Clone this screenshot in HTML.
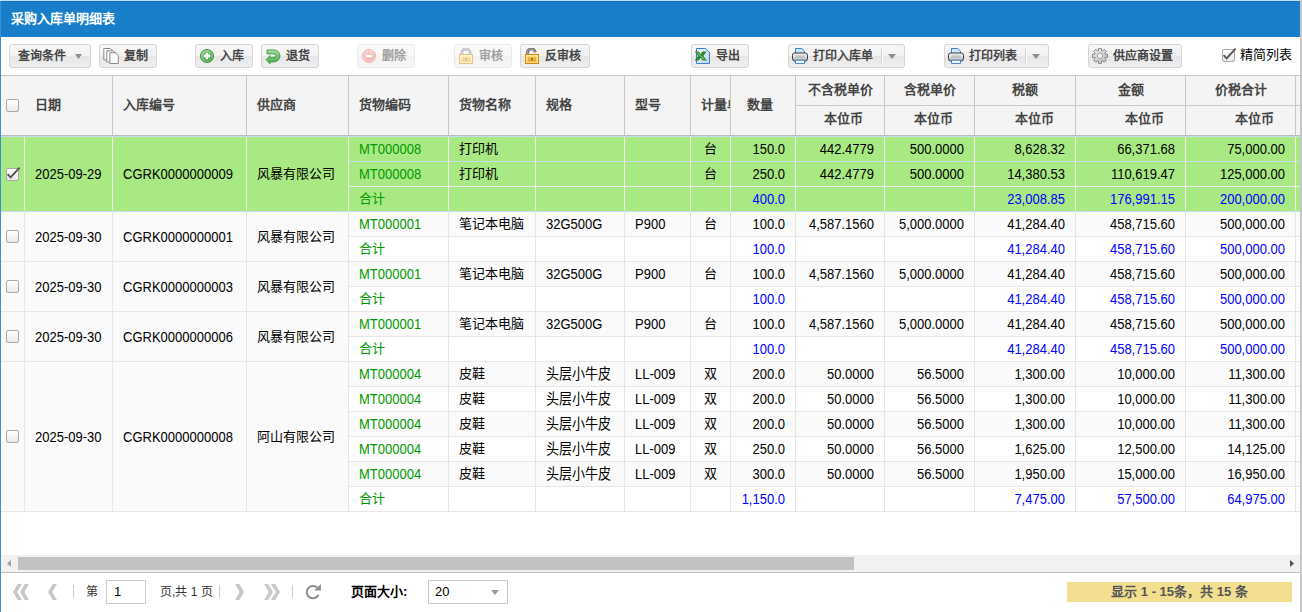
<!DOCTYPE html><html lang="zh-CN"><head><meta charset="utf-8"><style>
*{margin:0;padding:0;box-sizing:border-box}
html,body{width:1302px;height:612px;overflow:hidden;background:#fff}
body{position:relative;font-family:"Liberation Sans",sans-serif;color:#000}
.a{position:absolute}
.t{position:absolute;white-space:nowrap;font-size:13px;line-height:25px;height:25px}
.r{text-align:right}
.sy{transform:scaleY(1.1);transform-origin:0 8px}
.c{text-align:center}
.btn{position:absolute;top:44px;height:24px;border:1px solid #d6d6d6;border-radius:3px;
 background:linear-gradient(#f7f7f7 0,#f2f2f2 11px,#e6e6e6 11px,#efefef 22px)}
.bt{position:absolute;top:0;height:22px;line-height:22px;font-size:12px;font-weight:bold;color:#444;white-space:nowrap}
.ic{position:absolute;top:3px;width:16px;height:16px}
.hd{position:absolute;font-size:13px;font-weight:bold;color:#444;white-space:nowrap;height:20px;line-height:20px}
.cb{position:absolute;width:13px;height:13px;border:1px solid #a9a9a9;border-radius:2px;background:linear-gradient(#fff,#e9e9e9)}
</style></head><body>
<div class="a" style="left:0;top:0;width:1300px;height:1px;background:#c5dff2"></div>
<div class="a" style="left:0;top:1px;width:1300px;height:36px;background:#187eca"></div>
<div class="a" style="left:0;top:1px;width:1300px;height:1px;background:#0f74c6"></div>
<div class="a" style="left:11px;top:9px;height:20px;line-height:20px;font-size:13px;font-weight:bold;color:#fff;white-space:nowrap">采购入库单明细表</div>
<div class="btn" style="left:9px;width:82px"><div class="bt" style="left:8px;color:#444">查询条件</div></div>
<svg class="a" style="left:75px;top:54px" width="7" height="5" viewBox="0 0 7 5"><path d="M0 0h7L3.5 5z" fill="#8e8e8e"/></svg>
<div class="btn" style="left:99px;width:58px"><svg class="ic" style="left:3px" viewBox="0 0 16 16"><g stroke="#8a8a8a" stroke-width="1" stroke-linejoin="round">
<path d="M0.8 0.5h6.5l2 2v9.3h-8.5z" fill="#fff"/>
<path d="M3.8 2.8h6.5l2 2v9.2h-8.5z" fill="#fff"/>
<path d="M6.8 4.7h5.7l2.8 2.9v7.9h-8.5z" fill="#fbfbfb"/></g></svg><div class="bt" style="left:24px;color:#444">复制</div></div>
<div class="btn" style="left:195px;width:58px"><svg class="ic" style="left:3px" viewBox="0 0 16 16"><defs><linearGradient id="ga" x1="0" y1="0" x2="0.6" y2="1"><stop offset="0" stop-color="#9ad69a"/><stop offset="1" stop-color="#3f9f3f"/></linearGradient></defs>
<circle cx="8" cy="8" r="6.6" fill="url(#ga)" stroke="#3b8f3b" stroke-width="0.9"/><circle cx="8" cy="8" r="5.4" fill="none" stroke="#c4ebc4" stroke-width="0.6" opacity="0.8"/>
<path d="M6.8 4.8h2.4v2h2v2.4h-2v2H6.8v-2h-2V6.8h2z" fill="#fff"/></svg><div class="bt" style="left:24px;color:#444">入库</div></div>
<div class="btn" style="left:261px;width:58px"><svg class="ic" style="left:3px" viewBox="0 0 16 16"><defs><linearGradient id="gu" x1="0" y1="0" x2="0" y2="1"><stop offset="0" stop-color="#9fdc9f"/><stop offset="1" stop-color="#4aab4a"/></linearGradient></defs>
<path d="M2 1.9H9A6 6 0 0 1 9 13.9H5V15.8L1.1 11.7L5 7.6V9.3H9A1.7 1.7 0 0 0 9 5.9H2z" fill="url(#gu)" stroke="#3a8d3a" stroke-width="0.8" stroke-linejoin="round"/></svg><div class="bt" style="left:24px;color:#444">退货</div></div>
<div class="btn" style="left:357px;width:58px;opacity:0.5"><svg class="ic" style="left:3px" viewBox="0 0 16 16"><defs><linearGradient id="gd" x1="0" y1="0" x2="0" y2="1"><stop offset="0" stop-color="#f3a79d"/><stop offset="1" stop-color="#e0685c"/></linearGradient></defs>
<circle cx="8" cy="8" r="6.5" fill="url(#gd)" stroke="#d65a4e" stroke-width="0.9"/><circle cx="8" cy="8" r="5.4" fill="none" stroke="#fbd0cb" stroke-width="0.6"/>
<rect x="5" y="7" width="6" height="2.1" fill="#fff"/></svg><div class="bt" style="left:24px;color:#444">删除</div></div>
<div class="btn" style="left:454px;width:58px;opacity:0.5"><svg class="ic" style="left:3px" viewBox="0 0 16 16"><defs><linearGradient id="gl" x1="0" y1="0" x2="0" y2="1"><stop offset="0" stop-color="#ffe680"/><stop offset="1" stop-color="#f2b020"/></linearGradient></defs>
<path d="M3.8 7V5.2A4.2 4.2 0 0 1 12.2 5.2V7" fill="none" stroke="#7a7a7a" stroke-width="2.8"/><path d="M3.8 7V5.2A4.2 4.2 0 0 1 12.2 5.2V7" fill="none" stroke="#c4c4c4" stroke-width="0.9"/><rect x="1.5" y="6.5" width="13" height="9" fill="url(#gl)" stroke="#d8850f" stroke-width="1"/>
<rect x="2.7" y="7.7" width="10.6" height="6.6" fill="none" stroke="#fff3b8" stroke-width="0.8"/>
<path d="M4 10h2.2M4 12.2h2.2M9.8 10H12M9.8 12.2H12" stroke="#d98f20" stroke-width="0.9"/>
<rect x="7.2" y="9.4" width="1.6" height="3.4" rx="0.6" fill="#9a5c10"/></svg><div class="bt" style="left:24px;color:#444">审核</div></div>
<div class="btn" style="left:520px;width:70px"><svg class="ic" style="left:3px" viewBox="0 0 16 16"><defs><linearGradient id="gl2" x1="0" y1="0" x2="0" y2="1"><stop offset="0" stop-color="#ffe680"/><stop offset="1" stop-color="#f2b020"/></linearGradient></defs>
<path d="M3.4 6.6V4.8A3.9 3.6 0 0 1 11.2 4.3" fill="none" stroke="#6a6a6a" stroke-width="2.8"/><path d="M3.4 6.6V4.8A3.9 3.6 0 0 1 11.2 4.3" fill="none" stroke="#b8b8b8" stroke-width="0.9"/><rect x="1.5" y="6.5" width="13" height="9" fill="url(#gl2)" stroke="#d8850f" stroke-width="1"/>
<rect x="2.7" y="7.7" width="10.6" height="6.6" fill="none" stroke="#fff3b8" stroke-width="0.8"/>
<path d="M4 10h2.2M4 12.2h2.2M9.8 10H12M9.8 12.2H12" stroke="#d98f20" stroke-width="0.9"/>
<rect x="7.2" y="9.4" width="1.6" height="3.4" rx="0.6" fill="#9a5c10"/></svg><div class="bt" style="left:24px;color:#444">反审核</div></div>
<div class="btn" style="left:691px;width:58px"><svg class="ic" style="left:3px" viewBox="0 0 16 16"><defs><linearGradient id="gx" x1="0" y1="0" x2="1" y2="1"><stop offset="0" stop-color="#f2f7fe"/><stop offset="1" stop-color="#b9d3f3"/></linearGradient></defs>
<path d="M1.5 0.5h9.2l3.8 3.8v11.2h-13z" fill="url(#gx)" stroke="#3a7fd5" stroke-width="1" stroke-linejoin="round"/>
<path d="M0 3.8h3.8l1.9 2.6 1.9-2.6h3.6L8.1 8l3.3 4.2H7.7L5.7 9.5 3.6 12.2H0L3.4 8z" fill="#2c8a2c" stroke="#1f6f1f" stroke-width="0.4"/>
<path d="M2 4.4l7.4 7.2" stroke="#b5e3b5" stroke-width="0.8"/></svg><div class="bt" style="left:24px;color:#444">导出</div></div>
<div class="btn" style="left:788px;width:117px"><svg class="ic" style="left:3px" viewBox="0 0 16 16"><defs><linearGradient id="gp" x1="0" y1="0" x2="0" y2="1"><stop offset="0" stop-color="#f4f4f4"/><stop offset="0.5" stop-color="#dcdcdc"/><stop offset="1" stop-color="#a8a8a8"/></linearGradient></defs>
<path d="M3.5 0.5h6.3l2.7 2.7v4.5h-9z" fill="#cfe2fa" stroke="#3a7fd5" stroke-width="1"/>
<rect x="0.5" y="5" width="15" height="8" rx="2.2" fill="url(#gp)" stroke="#3a3a3a" stroke-width="1"/>
<rect x="3.5" y="7.4" width="9" height="3" fill="#c4c4c4"/>
<path d="M3.5 12.2h9v3.2h-9z" fill="#fff" stroke="#3a7fd5" stroke-width="1"/></svg><div class="bt" style="left:24px;color:#444">打印入库单</div><div class="a" style="left:92px;top:3px;width:1px;height:16px;background:#d2d2d2"></div><div class="a" style="left:93px;top:3px;width:1px;height:16px;background:#fff"></div></div>
<svg class="a" style="left:888px;top:54px" width="8" height="5" viewBox="0 0 8 5"><path d="M0 0h8L4.0 5z" fill="#8e8e8e"/></svg>
<div class="btn" style="left:944px;width:105px"><svg class="ic" style="left:3px" viewBox="0 0 16 16"><defs><linearGradient id="gp" x1="0" y1="0" x2="0" y2="1"><stop offset="0" stop-color="#f4f4f4"/><stop offset="0.5" stop-color="#dcdcdc"/><stop offset="1" stop-color="#a8a8a8"/></linearGradient></defs>
<path d="M3.5 0.5h6.3l2.7 2.7v4.5h-9z" fill="#cfe2fa" stroke="#3a7fd5" stroke-width="1"/>
<rect x="0.5" y="5" width="15" height="8" rx="2.2" fill="url(#gp)" stroke="#3a3a3a" stroke-width="1"/>
<rect x="3.5" y="7.4" width="9" height="3" fill="#c4c4c4"/>
<path d="M3.5 12.2h9v3.2h-9z" fill="#fff" stroke="#3a7fd5" stroke-width="1"/></svg><div class="bt" style="left:24px;color:#444">打印列表</div><div class="a" style="left:80px;top:3px;width:1px;height:16px;background:#d2d2d2"></div><div class="a" style="left:81px;top:3px;width:1px;height:16px;background:#fff"></div></div>
<svg class="a" style="left:1032px;top:54px" width="8" height="5" viewBox="0 0 8 5"><path d="M0 0h8L4.0 5z" fill="#8e8e8e"/></svg>
<div class="btn" style="left:1088px;width:94px"><svg class="ic" style="left:3px" viewBox="0 0 16 16"><defs><linearGradient id="gg" x1="0" y1="0" x2="1" y2="1"><stop offset="0" stop-color="#ececec"/><stop offset="1" stop-color="#bdbdbd"/></linearGradient></defs>
<path d="M6.40 2.64 L6.40 0.27 L9.60 0.27 L9.60 2.64 L10.52 3.02 L12.19 1.34 L14.46 3.61 L12.78 5.28 L13.16 6.20 L15.53 6.20 L15.53 9.40 L13.16 9.40 L12.78 10.32 L14.46 11.99 L12.19 14.26 L10.52 12.58 L9.60 12.96 L9.60 15.33 L6.40 15.33 L6.40 12.96 L5.48 12.58 L3.81 14.26 L1.54 11.99 L3.22 10.32 L2.84 9.40 L0.47 9.40 L0.47 6.20 L2.84 6.20 L3.22 5.28 L1.54 3.61 L3.81 1.34 L5.48 3.02Z" fill="url(#gg)" stroke="#7a7a7a" stroke-width="0.9" stroke-linejoin="round"/>
<circle cx="8" cy="7.8" r="2.7" fill="#f2f2f2" stroke="#9a9a9a" stroke-width="0.9"/></svg><div class="bt" style="left:24px;color:#444">供应商设置</div></div>
<div class="cb" style="left:1222px;top:49px"></div>
<svg class="a" style="left:1222px;top:45px" width="16" height="17" viewBox="0 0 16 17"><path d="M1.6 10.2L4.6 13.3L13.6 3.6" fill="none" stroke="#555" stroke-width="1.9"/></svg>
<div class="a" style="left:1240px;top:45px;height:20px;line-height:20px;font-size:13px;color:#000;white-space:nowrap">精简列表</div>
<div class="a" style="left:1px;top:75px;width:1299px;height:1px;background:#c6c6c6"></div>
<div class="a" style="left:1px;top:76px;width:1299px;height:59px;background:#f4f4f4"></div>
<div class="a" style="left:1px;top:135px;width:1299px;height:1px;background:#bcbcbc"></div>
<div class="a" style="left:112px;top:76px;width:1px;height:59px;background:#c8c8c8"></div>
<div class="a" style="left:246px;top:76px;width:1px;height:59px;background:#c8c8c8"></div>
<div class="a" style="left:348px;top:76px;width:1px;height:59px;background:#c8c8c8"></div>
<div class="a" style="left:448px;top:76px;width:1px;height:59px;background:#c8c8c8"></div>
<div class="a" style="left:535px;top:76px;width:1px;height:59px;background:#c8c8c8"></div>
<div class="a" style="left:624px;top:76px;width:1px;height:59px;background:#c8c8c8"></div>
<div class="a" style="left:690px;top:76px;width:1px;height:59px;background:#c8c8c8"></div>
<div class="a" style="left:730px;top:76px;width:1px;height:59px;background:#c8c8c8"></div>
<div class="a" style="left:795px;top:76px;width:1px;height:59px;background:#c8c8c8"></div>
<div class="a" style="left:884px;top:76px;width:1px;height:59px;background:#c8c8c8"></div>
<div class="a" style="left:974px;top:76px;width:1px;height:59px;background:#c8c8c8"></div>
<div class="a" style="left:1075px;top:76px;width:1px;height:59px;background:#c8c8c8"></div>
<div class="a" style="left:1185px;top:76px;width:1px;height:59px;background:#c8c8c8"></div>
<div class="a" style="left:1295px;top:76px;width:1px;height:59px;background:#c8c8c8"></div>
<div class="a" style="left:795px;top:105px;width:505px;height:1px;background:#c8c8c8"></div>
<div class="cb" style="left:6px;top:99px"></div>
<div class="hd" style="left:35px;top:95px">日期</div>
<div class="hd" style="left:123px;top:95px">入库编号</div>
<div class="hd" style="left:257px;top:95px">供应商</div>
<div class="hd" style="left:359px;top:95px">货物编码</div>
<div class="hd" style="left:459px;top:95px">货物名称</div>
<div class="hd" style="left:546px;top:95px">规格</div>
<div class="hd" style="left:635px;top:95px">型号</div>
<div class="hd" style="left:701px;top:95px;width:29px;text-align:left;overflow:hidden">计量单位</div>
<div class="hd" style="left:747px;top:95px">数量</div>
<div class="hd" style="left:796px;top:80px;width:88px;text-align:center;overflow:hidden">不含税单价</div>
<div class="hd" style="left:796px;top:109px;width:67px;text-align:right;overflow:hidden">本位币</div>
<div class="hd" style="left:885px;top:80px;width:89px;text-align:center;overflow:hidden">含税单价</div>
<div class="hd" style="left:885px;top:109px;width:68px;text-align:right;overflow:hidden">本位币</div>
<div class="hd" style="left:975px;top:80px;width:100px;text-align:center;overflow:hidden">税额</div>
<div class="hd" style="left:975px;top:109px;width:79px;text-align:right;overflow:hidden">本位币</div>
<div class="hd" style="left:1076px;top:80px;width:109px;text-align:center;overflow:hidden">金额</div>
<div class="hd" style="left:1076px;top:109px;width:88px;text-align:right;overflow:hidden">本位币</div>
<div class="hd" style="left:1186px;top:80px;width:109px;text-align:center;overflow:hidden">价税合计</div>
<div class="hd" style="left:1186px;top:109px;width:88px;text-align:right;overflow:hidden">本位币</div>
<div class="a" style="left:1px;top:137px;width:1299px;height:75px;background:#a8e984"></div>
<div class="a" style="left:1px;top:136px;width:1299px;height:1px;background:#c4dcf0"></div>
<div class="a" style="left:348px;top:161px;width:952px;height:1px;background:#c6def0"></div>
<div class="a" style="left:348px;top:186px;width:952px;height:1px;background:#e4ecf0"></div>
<div class="a" style="left:1px;top:211px;width:1299px;height:1px;background:#c4dcf5"></div>
<div class="a" style="left:24px;top:137px;width:1px;height:74px;background:#ececec"></div>
<div class="a" style="left:112px;top:137px;width:1px;height:74px;background:#ececec"></div>
<div class="a" style="left:246px;top:137px;width:1px;height:74px;background:#ececec"></div>
<div class="a" style="left:348px;top:137px;width:1px;height:74px;background:#ececec"></div>
<div class="a" style="left:448px;top:137px;width:1px;height:74px;background:#ececec"></div>
<div class="a" style="left:535px;top:137px;width:1px;height:74px;background:#ececec"></div>
<div class="a" style="left:624px;top:137px;width:1px;height:74px;background:#ececec"></div>
<div class="a" style="left:690px;top:137px;width:1px;height:74px;background:#ececec"></div>
<div class="a" style="left:730px;top:137px;width:1px;height:74px;background:#ececec"></div>
<div class="a" style="left:795px;top:137px;width:1px;height:74px;background:#ececec"></div>
<div class="a" style="left:884px;top:137px;width:1px;height:74px;background:#ececec"></div>
<div class="a" style="left:974px;top:137px;width:1px;height:74px;background:#ececec"></div>
<div class="a" style="left:1075px;top:137px;width:1px;height:74px;background:#ececec"></div>
<div class="a" style="left:1185px;top:137px;width:1px;height:74px;background:#ececec"></div>
<div class="a" style="left:1295px;top:137px;width:1px;height:74px;background:#ececec"></div>
<div class="cb" style="left:6px;top:168px"></div>
<svg class="a" style="left:6px;top:164px" width="16" height="17" viewBox="0 0 16 17"><path d="M1.6 10.2L4.6 13.3L13.6 3.6" fill="none" stroke="#555" stroke-width="1.9"/></svg>
<div class="t sy" style="left:35px;top:161px">2025-09-29</div>
<div class="t sy" style="left:123px;top:161px">CGRK0000000009</div>
<div class="t" style="left:257px;top:161px">风暴有限公司</div>
<div class="t sy" style="left:359px;top:136px;color:#009900">MT000008</div>
<div class="t" style="left:459px;top:136px">打印机</div>
<div class="t c" style="left:691px;top:136px;width:39px">台</div>
<div class="t r sy" style="left:730px;top:136px;width:55px;color:#000">150.0</div>
<div class="t r sy" style="left:795px;top:136px;width:79px;color:#000">442.4779</div>
<div class="t r sy" style="left:884px;top:136px;width:80px;color:#000">500.0000</div>
<div class="t r sy" style="left:974px;top:136px;width:91px;color:#000">8,628.32</div>
<div class="t r sy" style="left:1075px;top:136px;width:100px;color:#000">66,371.68</div>
<div class="t r sy" style="left:1185px;top:136px;width:100px;color:#000">75,000.00</div>
<div class="t sy" style="left:359px;top:161px;color:#009900">MT000008</div>
<div class="t" style="left:459px;top:161px">打印机</div>
<div class="t c" style="left:691px;top:161px;width:39px">台</div>
<div class="t r sy" style="left:730px;top:161px;width:55px;color:#000">250.0</div>
<div class="t r sy" style="left:795px;top:161px;width:79px;color:#000">442.4779</div>
<div class="t r sy" style="left:884px;top:161px;width:80px;color:#000">500.0000</div>
<div class="t r sy" style="left:974px;top:161px;width:91px;color:#000">14,380.53</div>
<div class="t r sy" style="left:1075px;top:161px;width:100px;color:#000">110,619.47</div>
<div class="t r sy" style="left:1185px;top:161px;width:100px;color:#000">125,000.00</div>
<div class="t" style="left:359px;top:186px;color:#009900">合计</div>
<div class="t r sy" style="left:730px;top:186px;width:55px;color:#0000ff">400.0</div>
<div class="t r sy" style="left:974px;top:186px;width:91px;color:#0000ff">23,008.85</div>
<div class="t r sy" style="left:1075px;top:186px;width:100px;color:#0000ff">176,991.15</div>
<div class="t r sy" style="left:1185px;top:186px;width:100px;color:#0000ff">200,000.00</div>
<div class="a" style="left:1px;top:212px;width:347px;height:49px;background:#fafafa"></div>
<div class="a" style="left:349px;top:212px;width:951px;height:24px;background:#fafafa"></div>
<div class="a" style="left:349px;top:237px;width:951px;height:24px;background:#ffffff"></div>
<div class="a" style="left:348px;top:236px;width:952px;height:1px;background:#e6e6e6"></div>
<div class="a" style="left:1px;top:261px;width:1299px;height:1px;background:#e6e6e6"></div>
<div class="a" style="left:24px;top:212px;width:1px;height:49px;background:#e6e6e6"></div>
<div class="a" style="left:112px;top:212px;width:1px;height:49px;background:#e6e6e6"></div>
<div class="a" style="left:246px;top:212px;width:1px;height:49px;background:#e6e6e6"></div>
<div class="a" style="left:348px;top:212px;width:1px;height:49px;background:#e6e6e6"></div>
<div class="a" style="left:448px;top:212px;width:1px;height:49px;background:#e6e6e6"></div>
<div class="a" style="left:535px;top:212px;width:1px;height:49px;background:#e6e6e6"></div>
<div class="a" style="left:624px;top:212px;width:1px;height:49px;background:#e6e6e6"></div>
<div class="a" style="left:690px;top:212px;width:1px;height:49px;background:#e6e6e6"></div>
<div class="a" style="left:730px;top:212px;width:1px;height:49px;background:#e6e6e6"></div>
<div class="a" style="left:795px;top:212px;width:1px;height:49px;background:#e6e6e6"></div>
<div class="a" style="left:884px;top:212px;width:1px;height:49px;background:#e6e6e6"></div>
<div class="a" style="left:974px;top:212px;width:1px;height:49px;background:#e6e6e6"></div>
<div class="a" style="left:1075px;top:212px;width:1px;height:49px;background:#e6e6e6"></div>
<div class="a" style="left:1185px;top:212px;width:1px;height:49px;background:#e6e6e6"></div>
<div class="a" style="left:1295px;top:212px;width:1px;height:49px;background:#e6e6e6"></div>
<div class="cb" style="left:6px;top:230px"></div>
<div class="t sy" style="left:35px;top:224px">2025-09-30</div>
<div class="t sy" style="left:123px;top:224px">CGRK0000000001</div>
<div class="t" style="left:257px;top:224px">风暴有限公司</div>
<div class="t sy" style="left:359px;top:211px;color:#009900">MT000001</div>
<div class="t" style="left:459px;top:211px">笔记本电脑</div>
<div class="t sy" style="left:546px;top:211px">32G500G</div>
<div class="t sy" style="left:635px;top:211px">P900</div>
<div class="t c" style="left:691px;top:211px;width:39px">台</div>
<div class="t r sy" style="left:730px;top:211px;width:55px;color:#000">100.0</div>
<div class="t r sy" style="left:795px;top:211px;width:79px;color:#000">4,587.1560</div>
<div class="t r sy" style="left:884px;top:211px;width:80px;color:#000">5,000.0000</div>
<div class="t r sy" style="left:974px;top:211px;width:91px;color:#000">41,284.40</div>
<div class="t r sy" style="left:1075px;top:211px;width:100px;color:#000">458,715.60</div>
<div class="t r sy" style="left:1185px;top:211px;width:100px;color:#000">500,000.00</div>
<div class="t" style="left:359px;top:236px;color:#009900">合计</div>
<div class="t r sy" style="left:730px;top:236px;width:55px;color:#0000ff">100.0</div>
<div class="t r sy" style="left:974px;top:236px;width:91px;color:#0000ff">41,284.40</div>
<div class="t r sy" style="left:1075px;top:236px;width:100px;color:#0000ff">458,715.60</div>
<div class="t r sy" style="left:1185px;top:236px;width:100px;color:#0000ff">500,000.00</div>
<div class="a" style="left:1px;top:262px;width:347px;height:49px;background:#fafafa"></div>
<div class="a" style="left:349px;top:262px;width:951px;height:24px;background:#fafafa"></div>
<div class="a" style="left:349px;top:287px;width:951px;height:24px;background:#ffffff"></div>
<div class="a" style="left:348px;top:286px;width:952px;height:1px;background:#e6e6e6"></div>
<div class="a" style="left:1px;top:311px;width:1299px;height:1px;background:#e6e6e6"></div>
<div class="a" style="left:24px;top:262px;width:1px;height:49px;background:#e6e6e6"></div>
<div class="a" style="left:112px;top:262px;width:1px;height:49px;background:#e6e6e6"></div>
<div class="a" style="left:246px;top:262px;width:1px;height:49px;background:#e6e6e6"></div>
<div class="a" style="left:348px;top:262px;width:1px;height:49px;background:#e6e6e6"></div>
<div class="a" style="left:448px;top:262px;width:1px;height:49px;background:#e6e6e6"></div>
<div class="a" style="left:535px;top:262px;width:1px;height:49px;background:#e6e6e6"></div>
<div class="a" style="left:624px;top:262px;width:1px;height:49px;background:#e6e6e6"></div>
<div class="a" style="left:690px;top:262px;width:1px;height:49px;background:#e6e6e6"></div>
<div class="a" style="left:730px;top:262px;width:1px;height:49px;background:#e6e6e6"></div>
<div class="a" style="left:795px;top:262px;width:1px;height:49px;background:#e6e6e6"></div>
<div class="a" style="left:884px;top:262px;width:1px;height:49px;background:#e6e6e6"></div>
<div class="a" style="left:974px;top:262px;width:1px;height:49px;background:#e6e6e6"></div>
<div class="a" style="left:1075px;top:262px;width:1px;height:49px;background:#e6e6e6"></div>
<div class="a" style="left:1185px;top:262px;width:1px;height:49px;background:#e6e6e6"></div>
<div class="a" style="left:1295px;top:262px;width:1px;height:49px;background:#e6e6e6"></div>
<div class="cb" style="left:6px;top:280px"></div>
<div class="t sy" style="left:35px;top:274px">2025-09-30</div>
<div class="t sy" style="left:123px;top:274px">CGRK0000000003</div>
<div class="t" style="left:257px;top:274px">风暴有限公司</div>
<div class="t sy" style="left:359px;top:261px;color:#009900">MT000001</div>
<div class="t" style="left:459px;top:261px">笔记本电脑</div>
<div class="t sy" style="left:546px;top:261px">32G500G</div>
<div class="t sy" style="left:635px;top:261px">P900</div>
<div class="t c" style="left:691px;top:261px;width:39px">台</div>
<div class="t r sy" style="left:730px;top:261px;width:55px;color:#000">100.0</div>
<div class="t r sy" style="left:795px;top:261px;width:79px;color:#000">4,587.1560</div>
<div class="t r sy" style="left:884px;top:261px;width:80px;color:#000">5,000.0000</div>
<div class="t r sy" style="left:974px;top:261px;width:91px;color:#000">41,284.40</div>
<div class="t r sy" style="left:1075px;top:261px;width:100px;color:#000">458,715.60</div>
<div class="t r sy" style="left:1185px;top:261px;width:100px;color:#000">500,000.00</div>
<div class="t" style="left:359px;top:286px;color:#009900">合计</div>
<div class="t r sy" style="left:730px;top:286px;width:55px;color:#0000ff">100.0</div>
<div class="t r sy" style="left:974px;top:286px;width:91px;color:#0000ff">41,284.40</div>
<div class="t r sy" style="left:1075px;top:286px;width:100px;color:#0000ff">458,715.60</div>
<div class="t r sy" style="left:1185px;top:286px;width:100px;color:#0000ff">500,000.00</div>
<div class="a" style="left:1px;top:312px;width:347px;height:49px;background:#fafafa"></div>
<div class="a" style="left:349px;top:312px;width:951px;height:24px;background:#fafafa"></div>
<div class="a" style="left:349px;top:337px;width:951px;height:24px;background:#ffffff"></div>
<div class="a" style="left:348px;top:336px;width:952px;height:1px;background:#e6e6e6"></div>
<div class="a" style="left:1px;top:361px;width:1299px;height:1px;background:#e6e6e6"></div>
<div class="a" style="left:24px;top:312px;width:1px;height:49px;background:#e6e6e6"></div>
<div class="a" style="left:112px;top:312px;width:1px;height:49px;background:#e6e6e6"></div>
<div class="a" style="left:246px;top:312px;width:1px;height:49px;background:#e6e6e6"></div>
<div class="a" style="left:348px;top:312px;width:1px;height:49px;background:#e6e6e6"></div>
<div class="a" style="left:448px;top:312px;width:1px;height:49px;background:#e6e6e6"></div>
<div class="a" style="left:535px;top:312px;width:1px;height:49px;background:#e6e6e6"></div>
<div class="a" style="left:624px;top:312px;width:1px;height:49px;background:#e6e6e6"></div>
<div class="a" style="left:690px;top:312px;width:1px;height:49px;background:#e6e6e6"></div>
<div class="a" style="left:730px;top:312px;width:1px;height:49px;background:#e6e6e6"></div>
<div class="a" style="left:795px;top:312px;width:1px;height:49px;background:#e6e6e6"></div>
<div class="a" style="left:884px;top:312px;width:1px;height:49px;background:#e6e6e6"></div>
<div class="a" style="left:974px;top:312px;width:1px;height:49px;background:#e6e6e6"></div>
<div class="a" style="left:1075px;top:312px;width:1px;height:49px;background:#e6e6e6"></div>
<div class="a" style="left:1185px;top:312px;width:1px;height:49px;background:#e6e6e6"></div>
<div class="a" style="left:1295px;top:312px;width:1px;height:49px;background:#e6e6e6"></div>
<div class="cb" style="left:6px;top:330px"></div>
<div class="t sy" style="left:35px;top:324px">2025-09-30</div>
<div class="t sy" style="left:123px;top:324px">CGRK0000000006</div>
<div class="t" style="left:257px;top:324px">风暴有限公司</div>
<div class="t sy" style="left:359px;top:311px;color:#009900">MT000001</div>
<div class="t" style="left:459px;top:311px">笔记本电脑</div>
<div class="t sy" style="left:546px;top:311px">32G500G</div>
<div class="t sy" style="left:635px;top:311px">P900</div>
<div class="t c" style="left:691px;top:311px;width:39px">台</div>
<div class="t r sy" style="left:730px;top:311px;width:55px;color:#000">100.0</div>
<div class="t r sy" style="left:795px;top:311px;width:79px;color:#000">4,587.1560</div>
<div class="t r sy" style="left:884px;top:311px;width:80px;color:#000">5,000.0000</div>
<div class="t r sy" style="left:974px;top:311px;width:91px;color:#000">41,284.40</div>
<div class="t r sy" style="left:1075px;top:311px;width:100px;color:#000">458,715.60</div>
<div class="t r sy" style="left:1185px;top:311px;width:100px;color:#000">500,000.00</div>
<div class="t" style="left:359px;top:336px;color:#009900">合计</div>
<div class="t r sy" style="left:730px;top:336px;width:55px;color:#0000ff">100.0</div>
<div class="t r sy" style="left:974px;top:336px;width:91px;color:#0000ff">41,284.40</div>
<div class="t r sy" style="left:1075px;top:336px;width:100px;color:#0000ff">458,715.60</div>
<div class="t r sy" style="left:1185px;top:336px;width:100px;color:#0000ff">500,000.00</div>
<div class="a" style="left:1px;top:362px;width:347px;height:149px;background:#fafafa"></div>
<div class="a" style="left:349px;top:362px;width:951px;height:24px;background:#fafafa"></div>
<div class="a" style="left:349px;top:387px;width:951px;height:24px;background:#ffffff"></div>
<div class="a" style="left:349px;top:412px;width:951px;height:24px;background:#fafafa"></div>
<div class="a" style="left:349px;top:437px;width:951px;height:24px;background:#ffffff"></div>
<div class="a" style="left:349px;top:462px;width:951px;height:24px;background:#fafafa"></div>
<div class="a" style="left:349px;top:487px;width:951px;height:24px;background:#ffffff"></div>
<div class="a" style="left:348px;top:386px;width:952px;height:1px;background:#e6e6e6"></div>
<div class="a" style="left:348px;top:411px;width:952px;height:1px;background:#e6e6e6"></div>
<div class="a" style="left:348px;top:436px;width:952px;height:1px;background:#e6e6e6"></div>
<div class="a" style="left:348px;top:461px;width:952px;height:1px;background:#e6e6e6"></div>
<div class="a" style="left:348px;top:486px;width:952px;height:1px;background:#e6e6e6"></div>
<div class="a" style="left:1px;top:511px;width:1299px;height:1px;background:#e6e6e6"></div>
<div class="a" style="left:24px;top:362px;width:1px;height:149px;background:#e6e6e6"></div>
<div class="a" style="left:112px;top:362px;width:1px;height:149px;background:#e6e6e6"></div>
<div class="a" style="left:246px;top:362px;width:1px;height:149px;background:#e6e6e6"></div>
<div class="a" style="left:348px;top:362px;width:1px;height:149px;background:#e6e6e6"></div>
<div class="a" style="left:448px;top:362px;width:1px;height:149px;background:#e6e6e6"></div>
<div class="a" style="left:535px;top:362px;width:1px;height:149px;background:#e6e6e6"></div>
<div class="a" style="left:624px;top:362px;width:1px;height:149px;background:#e6e6e6"></div>
<div class="a" style="left:690px;top:362px;width:1px;height:149px;background:#e6e6e6"></div>
<div class="a" style="left:730px;top:362px;width:1px;height:149px;background:#e6e6e6"></div>
<div class="a" style="left:795px;top:362px;width:1px;height:149px;background:#e6e6e6"></div>
<div class="a" style="left:884px;top:362px;width:1px;height:149px;background:#e6e6e6"></div>
<div class="a" style="left:974px;top:362px;width:1px;height:149px;background:#e6e6e6"></div>
<div class="a" style="left:1075px;top:362px;width:1px;height:149px;background:#e6e6e6"></div>
<div class="a" style="left:1185px;top:362px;width:1px;height:149px;background:#e6e6e6"></div>
<div class="a" style="left:1295px;top:362px;width:1px;height:149px;background:#e6e6e6"></div>
<div class="cb" style="left:6px;top:430px"></div>
<div class="t sy" style="left:35px;top:424px">2025-09-30</div>
<div class="t sy" style="left:123px;top:424px">CGRK0000000008</div>
<div class="t" style="left:257px;top:424px">阿山有限公司</div>
<div class="t sy" style="left:359px;top:361px;color:#009900">MT000004</div>
<div class="t" style="left:459px;top:361px">皮鞋</div>
<div class="t sy" style="left:546px;top:361px">头层小牛皮</div>
<div class="t sy" style="left:635px;top:361px">LL-009</div>
<div class="t c" style="left:691px;top:361px;width:39px">双</div>
<div class="t r sy" style="left:730px;top:361px;width:55px;color:#000">200.0</div>
<div class="t r sy" style="left:795px;top:361px;width:79px;color:#000">50.0000</div>
<div class="t r sy" style="left:884px;top:361px;width:80px;color:#000">56.5000</div>
<div class="t r sy" style="left:974px;top:361px;width:91px;color:#000">1,300.00</div>
<div class="t r sy" style="left:1075px;top:361px;width:100px;color:#000">10,000.00</div>
<div class="t r sy" style="left:1185px;top:361px;width:100px;color:#000">11,300.00</div>
<div class="t sy" style="left:359px;top:386px;color:#009900">MT000004</div>
<div class="t" style="left:459px;top:386px">皮鞋</div>
<div class="t sy" style="left:546px;top:386px">头层小牛皮</div>
<div class="t sy" style="left:635px;top:386px">LL-009</div>
<div class="t c" style="left:691px;top:386px;width:39px">双</div>
<div class="t r sy" style="left:730px;top:386px;width:55px;color:#000">200.0</div>
<div class="t r sy" style="left:795px;top:386px;width:79px;color:#000">50.0000</div>
<div class="t r sy" style="left:884px;top:386px;width:80px;color:#000">56.5000</div>
<div class="t r sy" style="left:974px;top:386px;width:91px;color:#000">1,300.00</div>
<div class="t r sy" style="left:1075px;top:386px;width:100px;color:#000">10,000.00</div>
<div class="t r sy" style="left:1185px;top:386px;width:100px;color:#000">11,300.00</div>
<div class="t sy" style="left:359px;top:411px;color:#009900">MT000004</div>
<div class="t" style="left:459px;top:411px">皮鞋</div>
<div class="t sy" style="left:546px;top:411px">头层小牛皮</div>
<div class="t sy" style="left:635px;top:411px">LL-009</div>
<div class="t c" style="left:691px;top:411px;width:39px">双</div>
<div class="t r sy" style="left:730px;top:411px;width:55px;color:#000">200.0</div>
<div class="t r sy" style="left:795px;top:411px;width:79px;color:#000">50.0000</div>
<div class="t r sy" style="left:884px;top:411px;width:80px;color:#000">56.5000</div>
<div class="t r sy" style="left:974px;top:411px;width:91px;color:#000">1,300.00</div>
<div class="t r sy" style="left:1075px;top:411px;width:100px;color:#000">10,000.00</div>
<div class="t r sy" style="left:1185px;top:411px;width:100px;color:#000">11,300.00</div>
<div class="t sy" style="left:359px;top:436px;color:#009900">MT000004</div>
<div class="t" style="left:459px;top:436px">皮鞋</div>
<div class="t sy" style="left:546px;top:436px">头层小牛皮</div>
<div class="t sy" style="left:635px;top:436px">LL-009</div>
<div class="t c" style="left:691px;top:436px;width:39px">双</div>
<div class="t r sy" style="left:730px;top:436px;width:55px;color:#000">250.0</div>
<div class="t r sy" style="left:795px;top:436px;width:79px;color:#000">50.0000</div>
<div class="t r sy" style="left:884px;top:436px;width:80px;color:#000">56.5000</div>
<div class="t r sy" style="left:974px;top:436px;width:91px;color:#000">1,625.00</div>
<div class="t r sy" style="left:1075px;top:436px;width:100px;color:#000">12,500.00</div>
<div class="t r sy" style="left:1185px;top:436px;width:100px;color:#000">14,125.00</div>
<div class="t sy" style="left:359px;top:461px;color:#009900">MT000004</div>
<div class="t" style="left:459px;top:461px">皮鞋</div>
<div class="t sy" style="left:546px;top:461px">头层小牛皮</div>
<div class="t sy" style="left:635px;top:461px">LL-009</div>
<div class="t c" style="left:691px;top:461px;width:39px">双</div>
<div class="t r sy" style="left:730px;top:461px;width:55px;color:#000">300.0</div>
<div class="t r sy" style="left:795px;top:461px;width:79px;color:#000">50.0000</div>
<div class="t r sy" style="left:884px;top:461px;width:80px;color:#000">56.5000</div>
<div class="t r sy" style="left:974px;top:461px;width:91px;color:#000">1,950.00</div>
<div class="t r sy" style="left:1075px;top:461px;width:100px;color:#000">15,000.00</div>
<div class="t r sy" style="left:1185px;top:461px;width:100px;color:#000">16,950.00</div>
<div class="t" style="left:359px;top:486px;color:#009900">合计</div>
<div class="t r sy" style="left:730px;top:486px;width:55px;color:#0000ff">1,150.0</div>
<div class="t r sy" style="left:974px;top:486px;width:91px;color:#0000ff">7,475.00</div>
<div class="t r sy" style="left:1075px;top:486px;width:100px;color:#0000ff">57,500.00</div>
<div class="t r sy" style="left:1185px;top:486px;width:100px;color:#0000ff">64,975.00</div>
<div class="a" style="left:1px;top:555px;width:1299px;height:17px;background:#f1f1f1"></div>
<div class="a" style="left:18px;top:557px;width:836px;height:13px;background:#c1c1c1"></div>
<svg class="a" style="left:7px;top:560px" width="4" height="7" viewBox="0 0 4 7"><path d="M4 0v7L0 3.5z" fill="#a3a3a3"/></svg>
<svg class="a" style="left:1290px;top:560px" width="4" height="7" viewBox="0 0 4 7"><path d="M0 0v7l4-3.5z" fill="#505050"/></svg>
<div class="a" style="left:1px;top:572px;width:1299px;height:1px;background:#c0c0c0"></div>
<svg class="a" style="left:13px;top:584px" width="16" height="16" viewBox="0 0 16 16"><path d="M9 0H4.7L0 8l4.7 8H9L4.3 8z" fill="#c8c8c8"/><path d="M9 0H4.7L0 8l4.7 8H9L4.3 8z" transform="translate(7 0)" fill="#c8c8c8"/></svg>
<svg class="a" style="left:48px;top:584px" width="9" height="16" viewBox="0 0 9 16"><path d="M9 0H4.7L0 8l4.7 8H9L4.3 8z" fill="#c8c8c8"/></svg>
<div class="a" style="left:73px;top:585px;width:1px;height:13px;background:#ccc"></div>
<div class="a" style="left:86px;top:582px;height:20px;line-height:20px;font-size:12px;color:#333;white-space:nowrap">第</div>
<div class="a" style="left:106px;top:580px;width:40px;height:24px;border:1px solid #ccc;background:#fff"></div>
<div class="a" style="left:114px;top:582px;height:20px;line-height:20px;font-size:13px;color:#000;white-space:nowrap">1</div>
<div class="a" style="left:160px;top:582px;height:20px;line-height:20px;font-size:12px;color:#333;white-space:nowrap">页,共 1 页</div>
<div class="a" style="left:219px;top:585px;width:1px;height:13px;background:#ccc"></div>
<svg class="a" style="left:235px;top:584px" width="9" height="16" viewBox="0 0 9 16"><path d="M0 0h4.3L9 8l-4.7 8H0L4.7 8z" fill="#c8c8c8"/></svg>
<svg class="a" style="left:264px;top:584px" width="16" height="16" viewBox="0 0 16 16"><path d="M0 0h4.3L9 8l-4.7 8H0L4.7 8z" fill="#c8c8c8"/><path d="M0 0h4.3L9 8l-4.7 8H0L4.7 8z" transform="translate(7 0)" fill="#c8c8c8"/></svg>
<div class="a" style="left:292px;top:585px;width:1px;height:13px;background:#ccc"></div>
<svg class="a" style="left:304px;top:583px" width="18" height="18" viewBox="0 0 18 18"><path d="M13.25 4.7A6.2 6.2 0 1 0 14.5 11.8" fill="none" stroke="#8c8c8c" stroke-width="2"/><path d="M16.9 1V7.6H10.3z" fill="#8c8c8c"/></svg>
<div class="a" style="left:351px;top:582px;height:20px;line-height:20px;font-size:13px;font-weight:bold;color:#000;white-space:nowrap">页面大小:</div>
<div class="a" style="left:428px;top:580px;width:80px;height:24px;border:1px solid #ccc;background:#fff"></div>
<div class="a" style="left:435px;top:582px;height:20px;line-height:20px;font-size:13px;color:#000;white-space:nowrap">20</div>
<svg class="a" style="left:491px;top:590px" width="8" height="5" viewBox="0 0 8 5"><path d="M0 0h8L4.0 5z" fill="#999"/></svg>
<div class="a" style="left:1067px;top:582px;width:225px;height:20px;background:#f2e090"></div>
<div class="a" style="left:1067px;top:582px;width:225px;height:20px;line-height:20px;font-size:13px;font-weight:bold;color:#555;text-align:center;white-space:nowrap">显示 1 - 15条，共 15 条</div>
<div class="a" style="left:0;top:1px;width:1px;height:611px;background:#3a90d2"></div>
<div class="a" style="left:1300px;top:0;width:2px;height:612px;background:#c6c6c6"></div>
</body></html>
